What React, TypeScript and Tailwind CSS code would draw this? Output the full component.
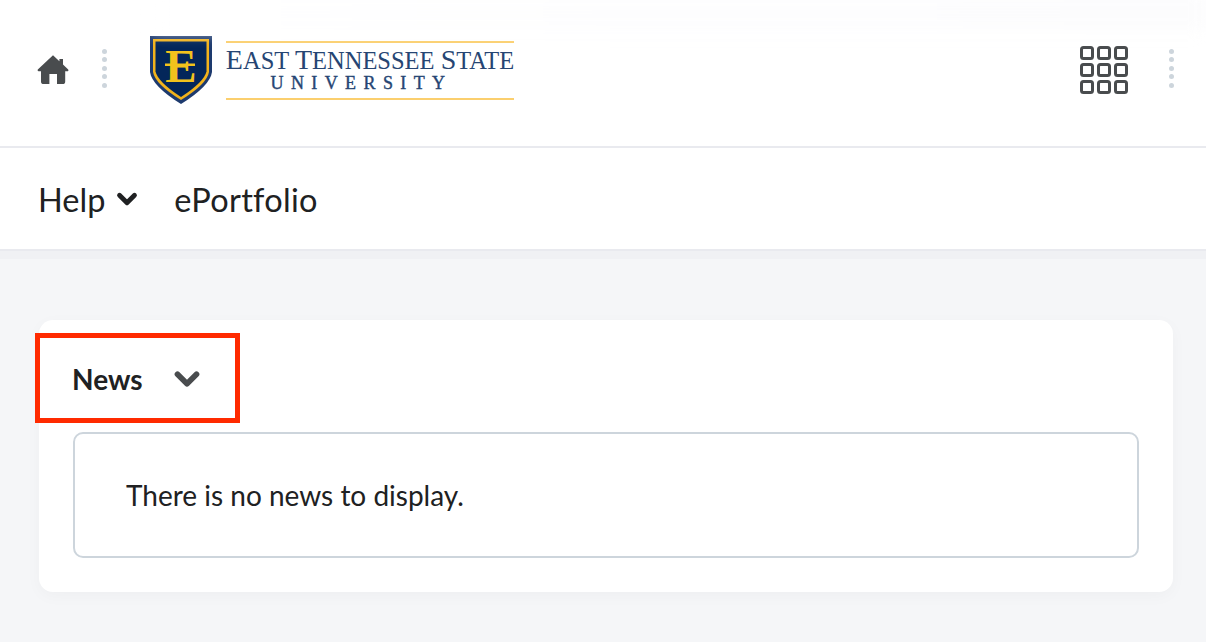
import { ChevronDown } from 'lucide-react';

// vertical five dot divider used in the top bar
function DotDivider() {
  return (
    <div className="flex flex-col gap-[3.5px]">
      {[0, 1, 2, 3, 4].map((i) => (
        <span key={i} className="block h-[5px] w-[5px] rounded-full bg-[#cdd5dc]" />
      ))}
    </div>
  );
}

function HomeIcon() {
  return (
    <svg width="32" height="32" viewBox="0 0 32 32" className="block">
      <path
        fill="#494c4e"
        d="M16 1.2 L22.4 7.2 V5 H26 V10.6 L31.2 15.4 Q32 16.6 30.8 17.2 H28.2 V27.4 Q28.2 30 25.6 30 H20 V20 H12.4 V30 H6.8 Q4 30 4 27.4 V17.2 H1.4 Q0 16.6 0.8 15.4 Z"
      />
    </svg>
  );
}

function Shield() {
  return (
    <svg width="62" height="68" viewBox="0 0 62 68" className="block shrink-0">
      <path fill="#1d3a6e" d="M0 0 H62 V36 Q60 50 31 68 Q2 50 0 36 Z" />
      <path fill="#f2b31c" d="M3 3 H59 V36 Q57 48 31 64 Q5 48 3 36 Z" />
      <path fill="#03265a" d="M5.5 5.5 H56.5 V35.5 Q54 46 31 61 Q8 46 5.5 35.5 Z" />
      <text
        x="31"
        y="45.5"
        textAnchor="middle"
        fontSize="47"
        fontWeight="700"
        fill="#f2c21c"
        fontFamily="'Liberation Serif', serif"
      >
        E
      </text>
      <rect x="15" y="27.5" width="30" height="2.5" fill="#f2c21c" />
    </svg>
  );
}

function Logo() {
  return (
    <div className="flex items-center gap-[14px]">
      <Shield />
      <div className="flex h-[59px] w-[288px] flex-col items-center border-y-2 border-[#fbcf6e] font-['Liberation_Serif',serif] text-[#264573]">
        <div className="mt-[4px] whitespace-nowrap text-[24.5px] leading-[26px]">
          <span className="text-[28px]">E</span>AST <span className="text-[28px]">T</span>ENNESSEE{' '}
          <span className="text-[28px]">S</span>TATE
        </div>
        <div className="mr-[17px] whitespace-nowrap text-[18px] leading-[18px] tracking-[7.4px] [-webkit-text-stroke:0.4px_#264573]">
          UNIVERSITY
        </div>
      </div>
    </div>
  );
}

function AppsIcon() {
  return (
    <div className="grid grid-cols-3 gap-[3px]">
      {[0, 1, 2, 3, 4, 5, 6, 7, 8].map((i) => (
        <span key={i} className="block h-[14px] w-[14px] rounded-[3.5px] border-[3.5px] border-[#494c4e]" />
      ))}
    </div>
  );
}

export default function App() {
  return (
    <div className="relative flex h-[642px] w-[1206px] flex-col overflow-hidden bg-[#f5f6f8] font-['Lato',sans-serif] text-[#202122]">
      {/* top bar */}
      <header className="flex h-[148px] items-center border-b-2 border-[#e9eaef] bg-white pb-[6px] pl-[37px] pr-[32px]">
        <HomeIcon />
        <div className="ml-[33px] mr-[43px] -mt-[4px]">
          <DotDivider />
        </div>
        <Logo />
        <div className="ml-auto flex items-center gap-[41px]">
          <AppsIcon />
          <div className="-mt-[4px]">
            <DotDivider />
          </div>
        </div>
      </header>

      {/* nav */}
      <nav className="flex h-[103px] items-center border-b-2 border-[#e9eaef] bg-white pl-[38px] pt-[4px] text-[32.5px] leading-none shadow-[0_8px_0_#f0f1f4]">
        <span>Help</span>
        <ChevronDown size={30} strokeWidth={3.8} className="-mt-[4px] ml-[7px] mr-[32px] text-[#202122]" />
        <span className="tracking-[0.3px]">ePortfolio</span>
      </nav>

      {/* news widget */}
      <main className="px-[33px] pt-[69px]">
        <section className="ml-[6px] h-[272px] w-[1134px] rounded-[14px] bg-white px-[34px] shadow-[0_4px_16px_rgba(0,0,0,0.03)]">
          <div className="flex h-[112px] items-center pt-[6px]">
            <h2 className="-ml-[1px] text-[28px] font-bold leading-none">News</h2>
            <ChevronDown size={38} strokeWidth={3.6} className="ml-[25px] text-[#494c4e]" />
          </div>
          <div className="flex h-[126px] w-[1066px] items-center rounded-[10px] border-2 border-[#cdd5dc] pl-[51px] text-[28px] leading-none">
            There is no news to display.
          </div>
        </section>
      </main>

      {/* faint smudge left at the top of the capture */}
      <div className="absolute left-[150px] -top-[6px] h-[36px] w-[1056px] bg-linear-to-r from-white via-[#fdfdfe] to-[#fcfcfd] blur-[8px]" />

      {/* annotation over the widget header */}
      <div className="absolute left-[35px] top-[333px] h-[90px] w-[205px] border-[5px] border-[#ff2a00]" />
    </div>
  );
}
